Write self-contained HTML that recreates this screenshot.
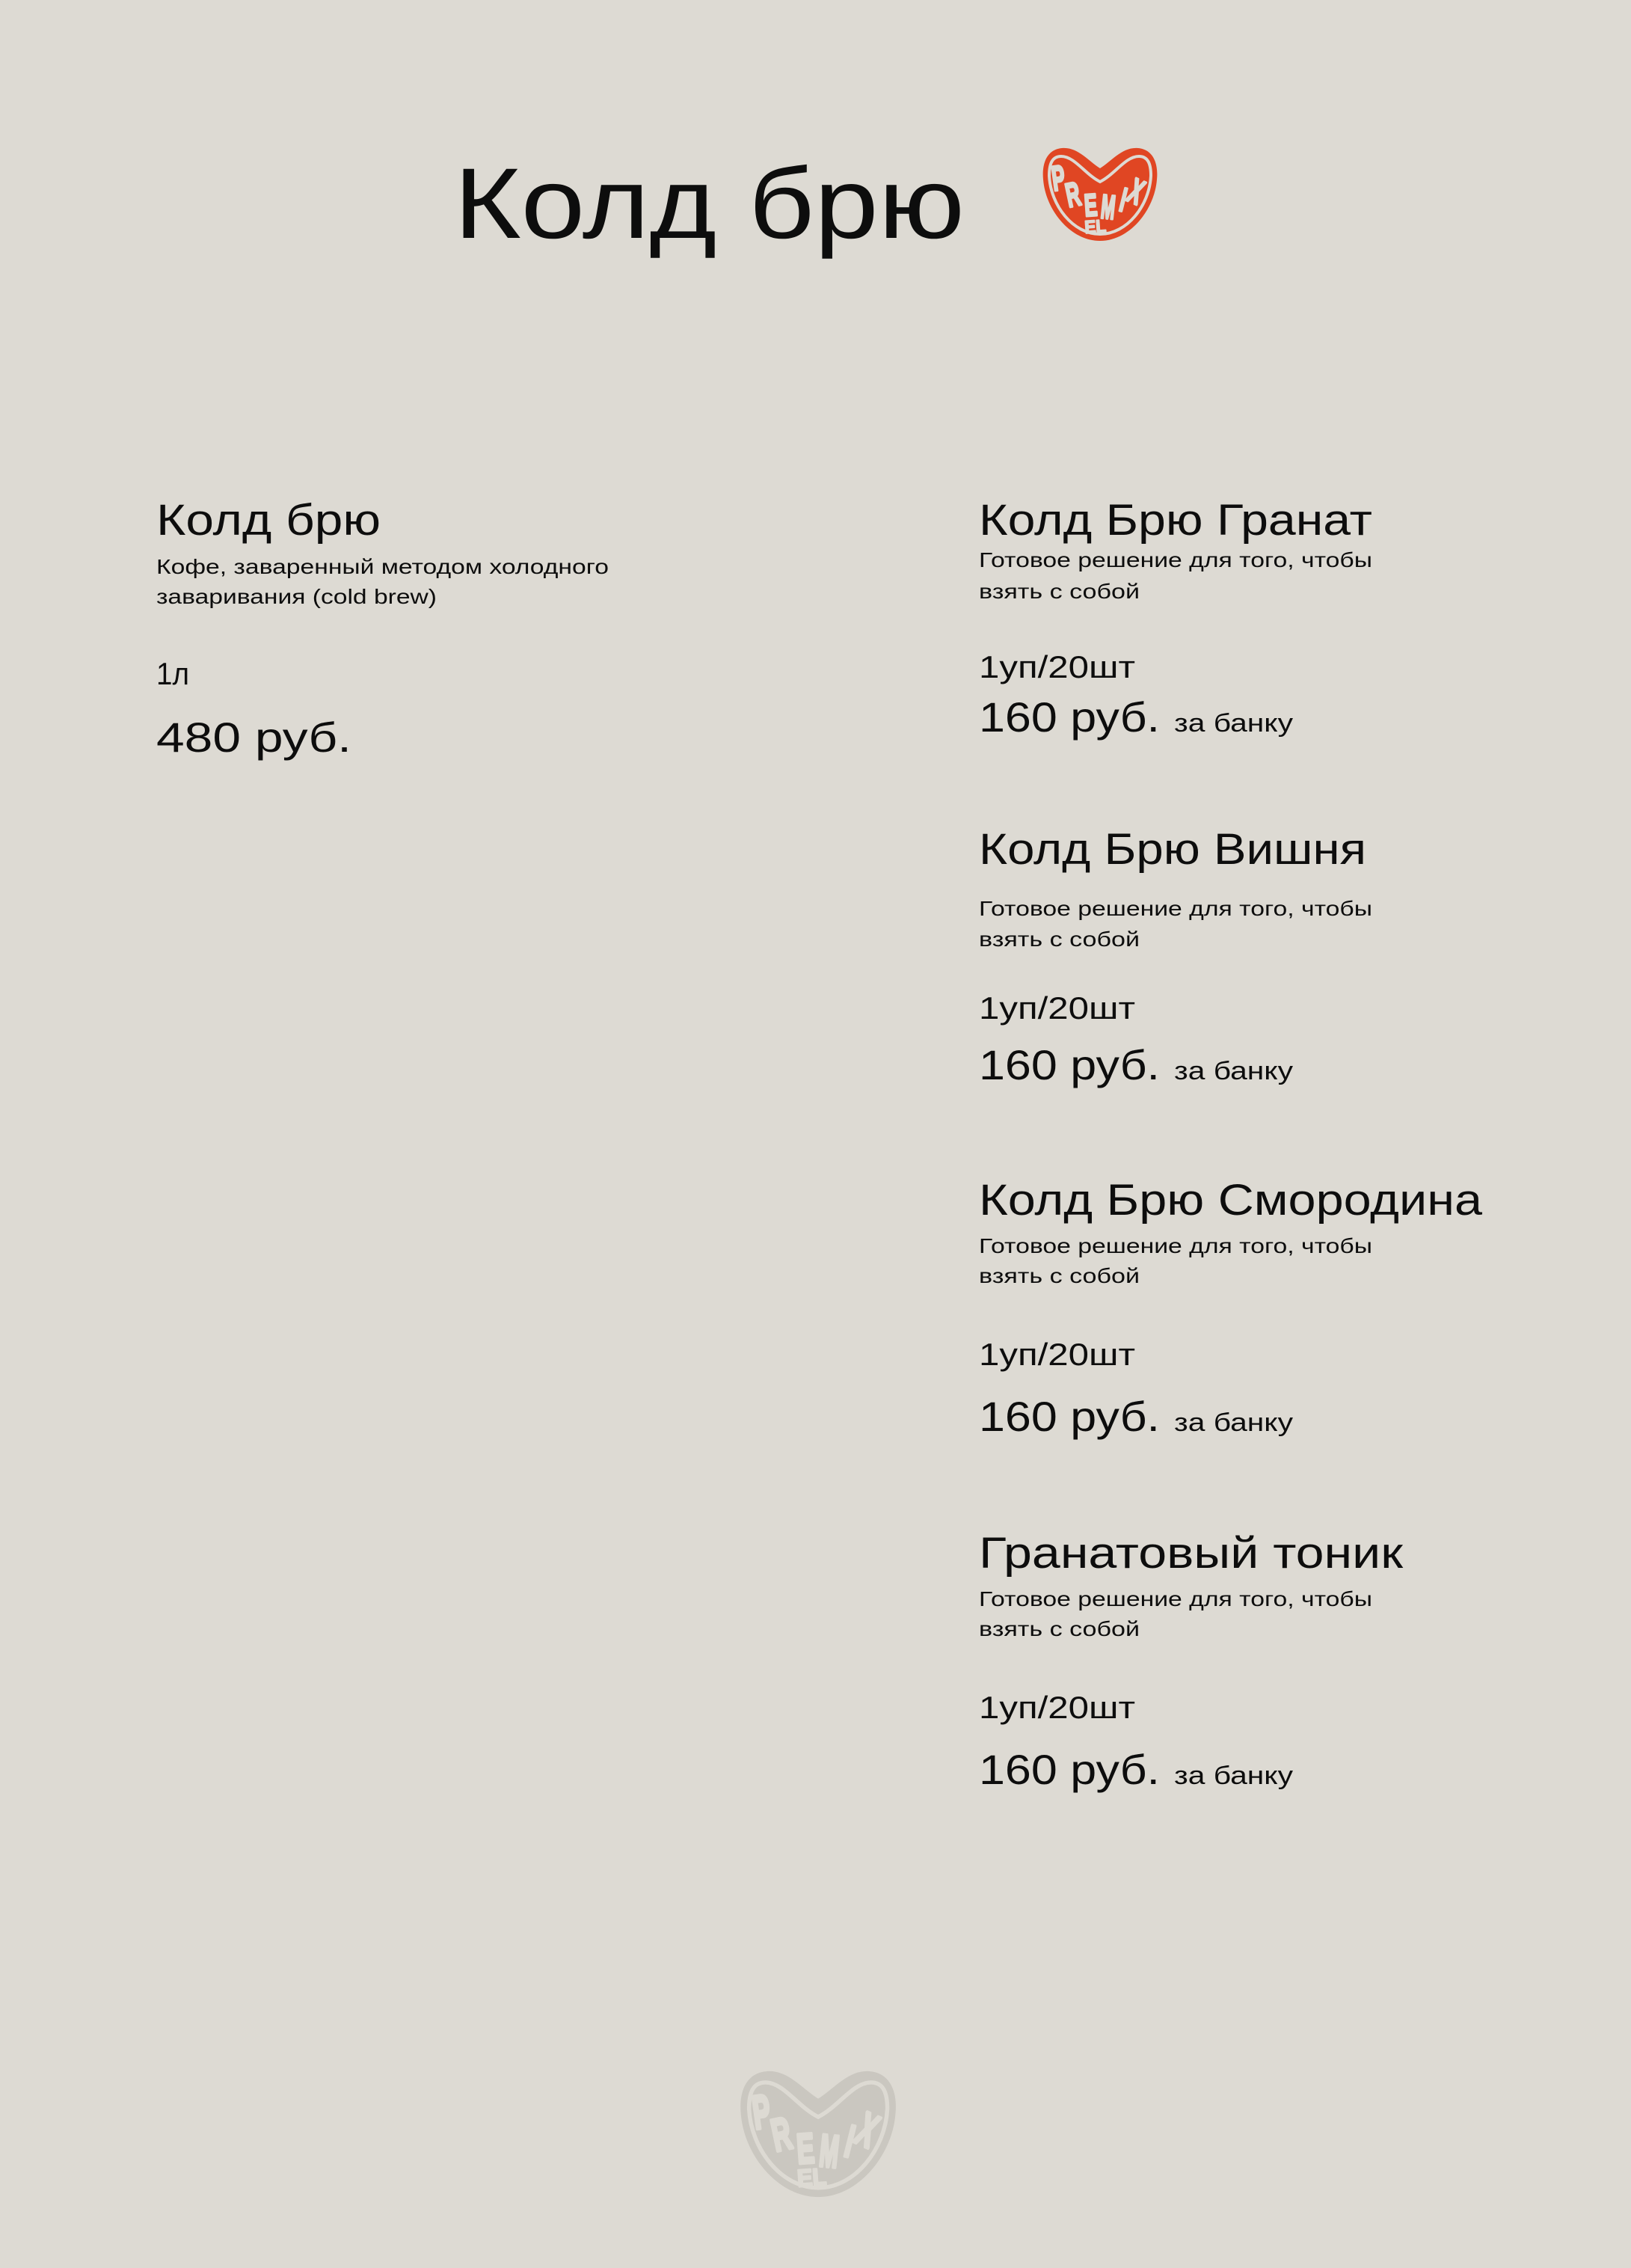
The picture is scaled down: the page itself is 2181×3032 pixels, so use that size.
<!DOCTYPE html>
<html><head><meta charset="utf-8"><style>
html,body{margin:0;padding:0;background:#dddad3;}
svg{display:block}
text{font-family:"Liberation Sans",sans-serif;fill:#0d0d0d}
text.lg{font-family:"Liberation Sans",sans-serif;font-weight:bold;font-size:32px;fill:#dddad3;stroke:#dddad3;stroke-width:2.5;stroke-linejoin:round}
</style></head><body>
<svg width="2181" height="3032" viewBox="0 0 2181 3032" xmlns="http://www.w3.org/2000/svg">
<defs>
<path id="outer" d="M78 30 C62 20 48 1 27 3 C6 5 0 25 2 45 C5 85 38 127 78 127 C118 127 151 85 154 45 C156 25 150 5 129 3 C108 1 94 20 78 30 Z"/>
<g id="logo">
<use href="#outer" fill="currentColor"/>
<path d="M78 48 C58 38 44 14 26 14 C14 14 10 24 10 40 C12 80 42 118 78 118 C114 118 144 80 146 40 C146 24 142 14 130 14 C112 14 98 38 78 48 Z" fill="none" stroke="#dddad3" stroke-width="4"/>
<text class="lg" transform="translate(16 60) rotate(-8) scale(0.8 1.45)">P</text>
<text class="lg" transform="translate(36 82) rotate(-12) scale(0.8 1.4)">R</text>
<text class="lg" transform="translate(58 94) rotate(-4) scale(0.8 1.3)">E</text>
<text class="lg" transform="translate(78 96) rotate(6) scale(0.7 1.4)">M</text>
<text class="lg" transform="translate(102 86) rotate(14) scale(0.8 1.4)">I</text>
<text class="lg" transform="translate(112 72) rotate(24) scale(0.8 1.45)">X</text>
<text class="lg" transform="translate(58 117) rotate(-4) scale(0.7 0.75)">EL</text>
</g>
</defs>
<rect width="2181" height="3032" fill="#dddad3"/>
<text x="607" y="318" font-size="134" textLength="683" lengthAdjust="spacingAndGlyphs">Колд брю</text>
<use href="#logo" transform="translate(1393 195)" color="#e04623"/>

<text x="209" y="715" font-size="58" textLength="300" lengthAdjust="spacingAndGlyphs">Колд брю</text>
<text x="209" y="767" font-size="28" textLength="605" lengthAdjust="spacingAndGlyphs">Кофе, заваренный методом холодного</text>
<text x="209" y="807" font-size="28" textLength="375" lengthAdjust="spacingAndGlyphs">заваривания (cold brew)</text>
<text x="209" y="915" font-size="42" textLength="44" lengthAdjust="spacingAndGlyphs">1л</text>
<text x="209" y="1005" font-size="56" textLength="261" lengthAdjust="spacingAndGlyphs">480 руб.</text>

<g>
<text x="1309" y="715" font-size="58" textLength="526" lengthAdjust="spacingAndGlyphs">Колд Брю Гранат</text>
<text x="1309" y="758" font-size="28" textLength="526" lengthAdjust="spacingAndGlyphs">Готовое решение для того, чтобы</text>
<text x="1309" y="800" font-size="28" textLength="215" lengthAdjust="spacingAndGlyphs">взять с собой</text>
<text x="1309" y="906" font-size="42" textLength="209" lengthAdjust="spacingAndGlyphs">1уп/20шт</text>
<text x="1309" y="978" font-size="56" textLength="242" lengthAdjust="spacingAndGlyphs">160 руб.</text>
<text x="1570" y="978" font-size="34" textLength="159" lengthAdjust="spacingAndGlyphs">за банку</text>
</g>
<g>
<text x="1309" y="1155" font-size="58" textLength="518" lengthAdjust="spacingAndGlyphs">Колд Брю Вишня</text>
<text x="1309" y="1224" font-size="28" textLength="526" lengthAdjust="spacingAndGlyphs">Готовое решение для того, чтобы</text>
<text x="1309" y="1265" font-size="28" textLength="215" lengthAdjust="spacingAndGlyphs">взять с собой</text>
<text x="1309" y="1362" font-size="42" textLength="209" lengthAdjust="spacingAndGlyphs">1уп/20шт</text>
<text x="1309" y="1443" font-size="56" textLength="242" lengthAdjust="spacingAndGlyphs">160 руб.</text>
<text x="1570" y="1443" font-size="34" textLength="159" lengthAdjust="spacingAndGlyphs">за банку</text>
</g>
<g>
<text x="1309" y="1624" font-size="58" textLength="673" lengthAdjust="spacingAndGlyphs">Колд Брю Смородина</text>
<text x="1309" y="1675" font-size="28" textLength="526" lengthAdjust="spacingAndGlyphs">Готовое решение для того, чтобы</text>
<text x="1309" y="1715" font-size="28" textLength="215" lengthAdjust="spacingAndGlyphs">взять с собой</text>
<text x="1309" y="1825" font-size="42" textLength="209" lengthAdjust="spacingAndGlyphs">1уп/20шт</text>
<text x="1309" y="1913" font-size="56" textLength="242" lengthAdjust="spacingAndGlyphs">160 руб.</text>
<text x="1570" y="1913" font-size="34" textLength="159" lengthAdjust="spacingAndGlyphs">за банку</text>
</g>
<g>
<text x="1309" y="2096" font-size="58" textLength="567" lengthAdjust="spacingAndGlyphs">Гранатовый тоник</text>
<text x="1309" y="2147" font-size="28" textLength="526" lengthAdjust="spacingAndGlyphs">Готовое решение для того, чтобы</text>
<text x="1309" y="2187" font-size="28" textLength="215" lengthAdjust="spacingAndGlyphs">взять с собой</text>
<text x="1309" y="2297" font-size="42" textLength="209" lengthAdjust="spacingAndGlyphs">1уп/20шт</text>
<text x="1309" y="2385" font-size="56" textLength="242" lengthAdjust="spacingAndGlyphs">160 руб.</text>
<text x="1570" y="2385" font-size="34" textLength="159" lengthAdjust="spacingAndGlyphs">за банку</text>
</g>

<use href="#logo" transform="translate(988 2765) scale(1.36 1.355)" color="#cac7c0"/>
</svg>
</body></html>
